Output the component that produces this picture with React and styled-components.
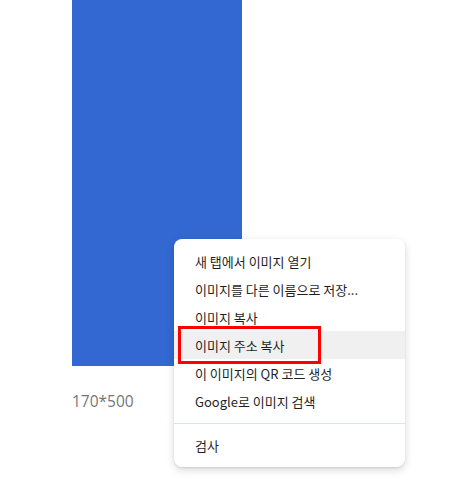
import React from "react";
import styled, { createGlobalStyle } from "styled-components";

const GlobalStyle = createGlobalStyle`
  html, body {
    margin: 0;
    padding: 0;
    background: #fff;
    font-family: "Noto Sans CJK KR", "Noto Sans", sans-serif;
  }
`;

const Page = styled.div`
  position: relative;
  width: 474px;
  height: 499px;
  overflow: hidden;
  padding-left: 72px;
  box-sizing: border-box;
`;

const Picture = styled.div`
  width: 170px;
  height: 366px;
  background: #3368d2;
`;

const SizeLabel = styled.div`
  margin-top: 24px;
  font-family: "Open Sans", "Noto Sans", sans-serif;
  font-size: 15.5px;
  line-height: 22px;
  color: #777;
`;

const Menu = styled.ul`
  position: absolute;
  left: 174px;
  top: 239px;
  width: 231px;
  margin: 0;
  padding: 8px 0;
  list-style: none;
  background: #fff;
  border-radius: 8px;
  box-shadow: 0 3px 8px rgba(0, 0, 0, 0.15), 0 1px 2px rgba(0, 0, 0, 0.1);
`;

const Item = styled.li`
  height: 28px;
  display: flex;
  align-items: center;
  padding-left: 21px;
  font-size: 13px;
  color: #1f1f1f;
  background: ${(p) => (p.$active ? "#f0f0f0" : "transparent")};
`;

const Separator = styled.li`
  height: 1px;
  margin: 8px 0 7px;
  background: #d3e3fd;
`;

const Highlight = styled.div`
  position: absolute;
  left: 178px;
  top: 326px;
  width: 143px;
  height: 38px;
  box-sizing: border-box;
  border: 3px solid #f00;
`;

const items = [
  "새 탭에서 이미지 열기",
  "이미지를 다른 이름으로 저장...",
  "이미지 복사",
  "이미지 주소 복사",
  "이 이미지의 QR 코드 생성",
  "Google로 이미지 검색",
];

export default function App() {
  return (
    <Page>
      <GlobalStyle />
      <Picture />
      <SizeLabel>170*500</SizeLabel>
      <Menu>
        {items.map((t, i) => (
          <Item key={t} $active={i === 3}>
            {t}
          </Item>
        ))}
        <Separator />
        <Item>검사</Item>
      </Menu>
      <Highlight />
    </Page>
  );
}
